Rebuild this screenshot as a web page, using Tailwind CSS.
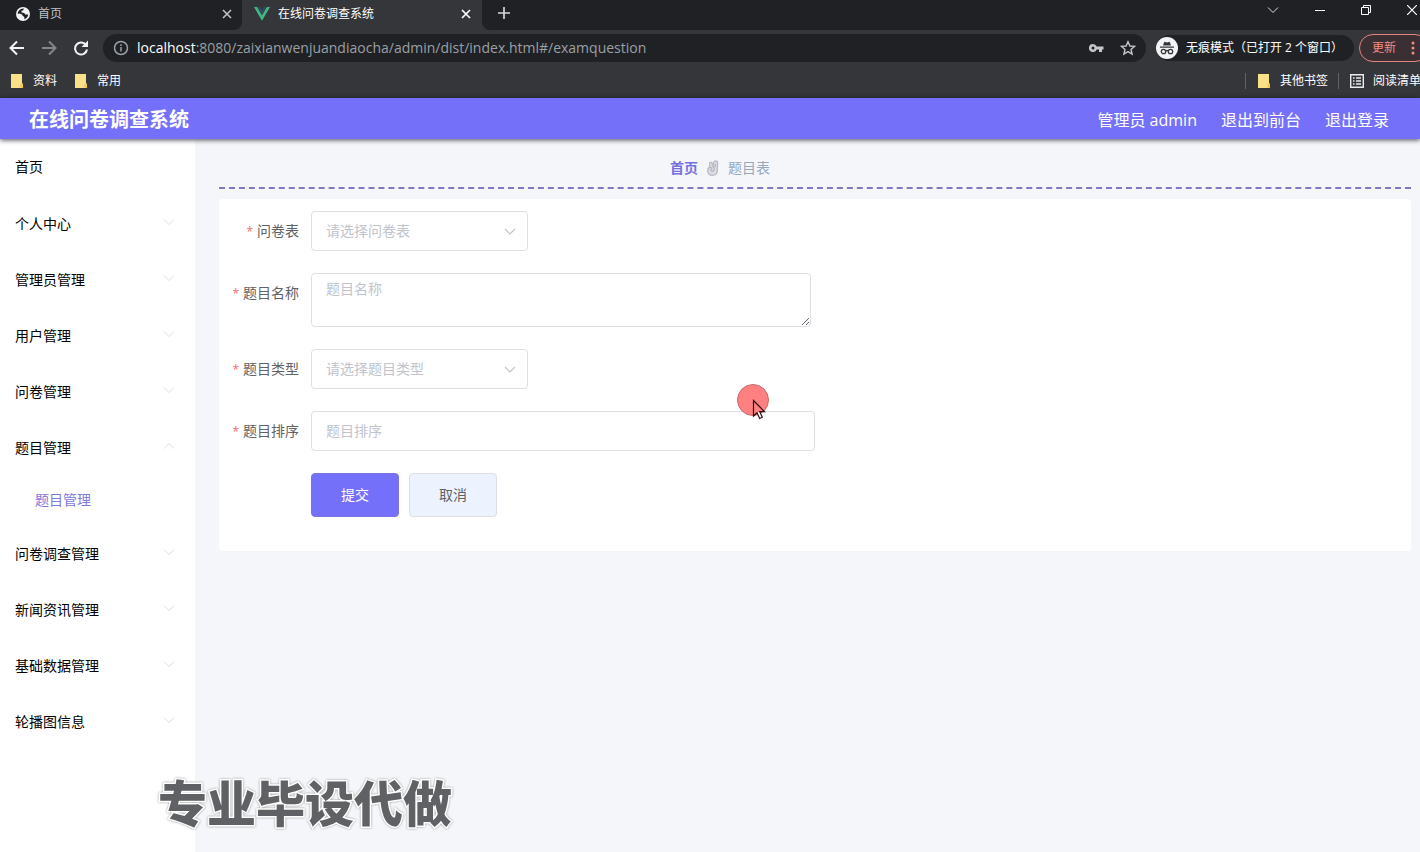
<!DOCTYPE html>
<html lang="zh-CN">
<head>
<meta charset="utf-8">
<title>在线问卷调查系统</title>
<script src="https://cdn.jsdelivr.net/npm/@tailwindcss/browser@4"></script>
</head>
<body class="flex min-h-screen flex-col overflow-x-hidden bg-[#f5f6fa] font-['Open_Sans','Noto_Sans_CJK_SC',sans-serif] text-sm text-[#606266]">

<!-- Browser chrome -->
<div class="flex flex-col overflow-hidden bg-[#35363a] text-xs whitespace-nowrap text-white">
  <div class="flex h-[30px]">
    <div class="flex w-[242px] shrink-0 items-center rounded-br-lg bg-[#202124] pr-[9px] pb-[3px] pl-4 text-[#bdc1c6]">
      <svg class="mr-2 size-[14px]" viewBox="0 0 14 14"><circle cx="7" cy="7" r="7" fill="#f1f3f4"/><path d="M7.800 1.500L7.300 3.200L5.600 3.800L5.500 5.600L8.200 6L9.300 7.400H12.300Q12 10.500 9.500 11.800L8.300 12.200Q8.800 10.500 7.800 9.600L6.500 8.800L6.200 7.400L3.400 6.600L1.700 7Q1.800 3.500 5 1.900Q6.400 1.300 7.800 1.500Z" fill="#202124"/></svg>
      <span class="grow">首页</span>
      <button aria-label="关闭标签页"><svg class="size-3" viewBox="0 0 12 12" stroke="#c4c7cb" stroke-width="1.500"><path d="M2 2L10 10M10 2L2 10"/></svg></button>
    </div>
    <div class="flex w-60 shrink-0 items-center pr-[10px] pb-[3px] pl-3">
      <svg class="mr-2 h-[14px] w-4" viewBox="0 0 16 14"><path d="M0 0H3.200L8 8.300L12.800 0H16L8 13.800Z" fill="#41b883"/><path d="M3.200 0H6.100L8 3.300L9.900 0H12.800L8 8.300Z" fill="#35495e"/></svg>
      <span class="grow">在线问卷调查系统</span>
      <button aria-label="关闭标签页"><svg class="size-3" viewBox="0 0 12 12" stroke="#fff" stroke-width="1.700"><path d="M2 2L10 10M10 2L2 10"/></svg></button>
    </div>
    <div class="flex grow items-center rounded-bl-lg bg-[#202124] pb-1 pl-4">
      <button aria-label="新标签页"><svg class="size-3" viewBox="0 0 12 12" stroke="#d5d7da" stroke-width="1.700"><path d="M6 0V12M0 6H12"/></svg></button>
      <div class="ml-auto flex items-center gap-9 pr-[3px] pb-[6px]">
        <button aria-label="搜索标签页"><svg class="size-3" viewBox="0 0 12 12" fill="none" stroke="#dadce0"><path d="M1 3.500L6 8.500L11 3.500"/></svg></button>
        <button aria-label="最小化"><svg class="size-[10px]" viewBox="0 0 10 10" stroke="#fff"><path d="M0 5.500H10"/></svg></button>
        <button aria-label="还原"><svg class="size-[10px]" viewBox="0 0 10 10" fill="none" stroke="#fff"><path d="M.5 2.500H7.500V9.500H.5ZM2.500 2.500V.5H9.500V7.500H7.500"/></svg></button>
        <button aria-label="关闭"><svg class="size-[10px]" viewBox="0 0 10 10" stroke="#fff" stroke-width="1.200"><path d="M0 0L10 10M10 0L0 10"/></svg></button>
      </div>
    </div>
  </div>

  <div class="flex h-9 items-center pl-[9px]">
    <button class="mr-4" aria-label="后退"><svg class="size-4" viewBox="0 0 16 16" fill="none" stroke="#f1f3f4" stroke-width="2"><path d="M15 8H2M8 1.500L1.500 8L8 14.500"/></svg></button>
    <button class="mr-4" aria-label="前进"><svg class="size-4" viewBox="0 0 16 16" fill="none" stroke="#85878a" stroke-width="2"><path d="M1 8H14M8 1.500L14.500 8L8 14.500"/></svg></button>
    <button class="mr-[14px]" aria-label="重新加载"><svg class="size-4" viewBox="0 0 16 16"><path d="M13.200 5.400A6 6 0 1 0 14 9.500" fill="none" stroke="#f1f3f4" stroke-width="2"/><path d="M15 .5V7H8.500Z" fill="#f1f3f4"/></svg></button>
    <div class="flex h-7 grow items-center rounded-full bg-[#202124] pr-[10px] pl-[10px]">
      <svg class="mr-2 size-4" viewBox="0 0 16 16" fill="none" stroke="#9aa0a6" stroke-width="1.500"><circle cx="8" cy="8" r="6.500"/><path d="M8 7V11.500M8 4.300V6"/></svg>
      <div class="grow text-sm text-[#9aa0a6]"><span class="text-white">localhost</span>:8080/zaixianwenjuandiaocha/admin/dist/index.html#/examquestion</div>
      <button class="mr-4" aria-label="密码"><svg class="h-4 w-4" viewBox="0 0 16 16"><path d="M5 4A4 4 0 1 0 8.700 9.400H11V12H14V9.400H15.500V6.600H8.700A4 4 0 0 0 5 4ZM5 6.500A1.500 1.500 0 1 1 5 9.500A1.500 1.500 0 1 1 5 6.500Z" fill="#c4c7cb" fill-rule="evenodd"/></svg></button>
      <button aria-label="添加书签"><svg class="size-4" viewBox="0 0 16 16" fill="none" stroke="#c4c7cb" stroke-width="1.400"><path d="M8 1.700L9.900 6L14.500 6.400L11 9.500L12.100 14L8 11.600L3.900 14L5 9.500L1.500 6.400L6.100 6Z"/></svg></button>
    </div>
    <button class="ml-[10px] flex h-[26px] w-[198px] shrink-0 items-center rounded-full bg-[#202124]">
      <svg class="mr-2 size-[22px]" viewBox="0 0 22 22"><circle cx="11" cy="11" r="11" fill="#f1f3f4"/><path d="M7 8.500L8.300 4.800L11 5.500L13.700 4.800L15 8.500Z" fill="#35363a"/><g fill="none" stroke="#35363a" stroke-width="1.300"><path d="M4 10.200H18M9.500 14Q11 13 12.500 14"/><circle cx="7.500" cy="14.500" r="2.200"/><circle cx="14.500" cy="14.500" r="2.200"/></g></svg>
      <span>无痕模式（已打开 2 个窗口）</span>
    </button>
    <button class="-mr-[9px] ml-[5px] flex h-7 w-[70px] shrink-0 items-center rounded-full border border-[#e8847b] bg-[#3a3034] pl-3 text-[#f28b82]">
      <span class="grow text-left">更新</span>
      <svg class="mr-[13px] h-4 w-1" viewBox="0 0 4 16" fill="#f28b82"><circle cx="2" cy="3" r="1.500"/><circle cx="2" cy="8" r="1.500"/><circle cx="2" cy="13" r="1.500"/></svg>
    </button>
  </div>

  <div class="flex h-8 items-center pb-[3px] pl-[11px]">
    <a href="#" class="mr-[18px] flex items-center gap-[10px]"><svg class="h-[14px] w-3" viewBox="0 0 12 14"><path d="M0 0H11V9.500H12V14H0Z" fill="#fbe08a"/><path d="M9.500 10H12V14H9.500Z" fill="#f2c94c"/></svg>资料</a>
    <a href="#" class="flex items-center gap-[10px]"><svg class="h-[14px] w-3" viewBox="0 0 12 14"><path d="M0 0H11V9.500H12V14H0Z" fill="#fbe08a"/><path d="M9.500 10H12V14H9.500Z" fill="#f2c94c"/></svg>常用</a>
    <a href="#" class="ml-auto flex items-center gap-[10px] border-l border-[#5f6368] pr-[10px] pl-3"><svg class="h-[14px] w-3" viewBox="0 0 12 14"><path d="M0 0H11V9.500H12V14H0Z" fill="#fbe08a"/><path d="M9.500 10H12V14H9.500Z" fill="#f2c94c"/></svg>其他书签</a>
    <button class="flex w-[82px] items-center gap-2 overflow-hidden border-l border-[#5f6368] pl-[10px]"><svg class="size-4 shrink-0" viewBox="0 0 16 16" fill="none" stroke="#e8eaed" stroke-width="1.400"><path d="M1.700 1.700H14.300V14.300H1.700Z"/><path d="M4 5H5.500M7 5H12M4 8H5.500M7 8H12M4 11H5.500M7 11H12"/></svg>阅读清单</button>
  </div>
</div>

<!-- Application header -->
<header class="relative z-10 flex h-[41px] items-center bg-[#7570f9] pt-[2px] pr-[31px] pl-[29px] text-white shadow-[0_1px_5px_rgba(0,0,0,0.7)]">
  <h1 class="grow text-xl font-bold">在线问卷调查系统</h1>
  <div class="flex gap-6 text-base"><span>管理员 admin</span><a href="#">退出到前台</a><a href="#">退出登录</a></div>
</header>

<div class="flex grow">
  <nav class="w-[195px] shrink-0 bg-white text-black">
    <a href="#" class="flex h-[57px] items-center pb-[2px] pl-[15px]">首页</a>
    <button class="flex h-14 w-full items-center justify-between pr-5 pl-[15px]">个人中心<svg class="mb-1 size-3" viewBox="0 0 12 12" fill="none" stroke="#dcdee2"><path d="M1 3.500L6 8.500L11 3.500"/></svg></button>
    <button class="flex h-14 w-full items-center justify-between pr-5 pl-[15px]">管理员管理<svg class="mb-1 size-3" viewBox="0 0 12 12" fill="none" stroke="#dcdee2"><path d="M1 3.500L6 8.500L11 3.500"/></svg></button>
    <button class="flex h-14 w-full items-center justify-between pr-5 pl-[15px]">用户管理<svg class="mb-1 size-3" viewBox="0 0 12 12" fill="none" stroke="#dcdee2"><path d="M1 3.500L6 8.500L11 3.500"/></svg></button>
    <button class="flex h-14 w-full items-center justify-between pr-5 pl-[15px]">问卷管理<svg class="mb-1 size-3" viewBox="0 0 12 12" fill="none" stroke="#dcdee2"><path d="M1 3.500L6 8.500L11 3.500"/></svg></button>
    <button class="flex h-14 w-full items-center justify-between pr-5 pl-[15px]">题目管理<svg class="mb-1 size-3" viewBox="0 0 12 12" fill="none" stroke="#dcdee2"><path d="M1 8.500L6 3.500L11 8.500"/></svg></button>
    <a href="#" class="flex h-[50px] items-center pb-[2px] pl-[35px] text-[#8078dc]">题目管理</a>
    <button class="flex h-14 w-full items-center justify-between pr-5 pl-[15px]">问卷调查管理<svg class="mb-1 size-3" viewBox="0 0 12 12" fill="none" stroke="#dcdee2"><path d="M1 3.500L6 8.500L11 3.500"/></svg></button>
    <button class="flex h-14 w-full items-center justify-between pr-5 pl-[15px]">新闻资讯管理<svg class="mb-1 size-3" viewBox="0 0 12 12" fill="none" stroke="#dcdee2"><path d="M1 3.500L6 8.500L11 3.500"/></svg></button>
    <button class="flex h-14 w-full items-center justify-between pr-5 pl-[15px]">基础数据管理<svg class="mb-1 size-3" viewBox="0 0 12 12" fill="none" stroke="#dcdee2"><path d="M1 3.500L6 8.500L11 3.500"/></svg></button>
    <button class="flex h-14 w-full items-center justify-between pr-5 pl-[15px]">轮播图信息<svg class="mb-1 size-3" viewBox="0 0 12 12" fill="none" stroke="#dcdee2"><path d="M1 3.500L6 8.500L11 3.500"/></svg></button>
  </nav>

  <main class="grow pr-[9px] pl-6">
    <div class="mb-[10px] flex h-[50px] items-center justify-center gap-2 border-b-2 border-dashed border-[#8078c4] pt-[10px] pr-[190px]">
      <a href="#" class="font-bold text-[#7570e0]">首页</a>
      <svg class="h-4 w-[14px]" viewBox="0 0 14 16" fill="#dcdee4" stroke="#b9bbc5" stroke-width="1.300" stroke-linejoin="round"><path d="M3.500 7.500L3.600 3.500Q3.700 2.200 4.900 2.200Q6 2.200 6.200 3.500L6.800 6.500L7.800 2Q8.200 .7 9.700 .8Q11.800 1 11.600 3L11.300 11Q11 15.300 6.500 15.300Q1.800 15.300 1.800 11Q1.600 8 3.500 7.500Z"/><path d="M3.500 7.500Q6 7 5.800 9Q5.500 10.500 4 10.500M6.800 6.500Q9 7 8.300 9.500Q7.500 11.500 5.500 12M9.500 3.500L9.200 7" fill="none"/></svg>
      <span class="text-[#97a8be]">题目表</span>
    </div>

    <form class="flex flex-col gap-[22px] rounded bg-white pt-3 pb-[34px]">
      <div class="flex">
        <label for="paper" class="w-20 shrink-0 text-right leading-10"><span class="mr-1 text-xs text-[#f56c6c]">*</span>问卷表</label>
        <div class="relative ml-3 h-10 w-[217px]">
          <select id="paper" class="size-full appearance-none rounded border border-[#dcdfe6] bg-white px-[14px] text-[#c0c4cc] outline-none"><option>请选择问卷表</option></select>
          <svg class="pointer-events-none absolute top-[14px] right-3 size-3" viewBox="0 0 12 12" fill="none" stroke="#c0c4cc" stroke-width="1.200"><path d="M1 4L6 9L11 4"/></svg>
        </div>
      </div>
      <div class="flex">
        <label for="name" class="w-20 shrink-0 text-right leading-10"><span class="mr-1 text-xs text-[#f56c6c]">*</span>题目名称</label>
        <textarea id="name" placeholder="题目名称" class="ml-3 h-[54px] w-[500px] resize rounded border border-[#dcdfe6] px-[14px] py-[5px] placeholder:text-[#c0c4cc]"></textarea>
      </div>
      <div class="flex">
        <label for="type" class="w-20 shrink-0 text-right leading-10"><span class="mr-1 text-xs text-[#f56c6c]">*</span>题目类型</label>
        <div class="relative ml-3 h-10 w-[217px]">
          <select id="type" class="size-full appearance-none rounded border border-[#dcdfe6] bg-white px-[14px] text-[#c0c4cc] outline-none"><option>请选择题目类型</option></select>
          <svg class="pointer-events-none absolute top-[14px] right-3 size-3" viewBox="0 0 12 12" fill="none" stroke="#c0c4cc" stroke-width="1.200"><path d="M1 4L6 9L11 4"/></svg>
        </div>
      </div>
      <div class="flex">
        <label for="order" class="w-20 shrink-0 text-right leading-10"><span class="mr-1 text-xs text-[#f56c6c]">*</span>题目排序</label>
        <input id="order" type="text" placeholder="题目排序" class="ml-3 h-10 w-[504px] rounded border border-[#dcdfe6] px-[14px] pb-[2px] placeholder:text-[#c0c4cc]">
      </div>
      <div class="flex gap-[10px] pl-[92px]">
        <button type="submit" class="h-11 w-[88px] rounded border border-[#7a72e8] bg-[#7570f9] text-white">提交</button>
        <button type="button" class="h-11 w-[88px] rounded border border-[#dcdfe6] bg-[#ecf3ff]">取消</button>
      </div>
    </form>
  </main>
</div>

<!-- Floating caption and mouse pointer -->
<div class="pointer-events-none absolute top-[766px] left-[158px] z-20 text-[49px] leading-[74px] font-black whitespace-nowrap text-[#606164] [paint-order:stroke_fill] [-webkit-text-stroke:3px_#fff] [filter:drop-shadow(0_0_1px_#999)]">专业毕设代做</div>
<svg class="pointer-events-none absolute top-[384px] left-[737px] z-20 h-9 w-8" viewBox="0 0 32 36"><circle cx="16" cy="16" r="15.500" fill="#ff8080" stroke="#c46a70"/><path d="M16.500 16.500V32L20 28.700L22.700 34.500L25.300 33.300L22.700 27.700H27.500Z" fill="#fff"/><path d="M16.500 16.500V31.800L20 28.700H20.500L22.500 27.700H27.500Z" fill="#ff8080"/><path d="M16.500 16.500V32L20 28.700L22.700 34.500L25.300 33.300L22.700 27.700H27.500Z" fill="none" stroke="#2b0b12" stroke-width="1.200"/></svg>
</body>
</html>
